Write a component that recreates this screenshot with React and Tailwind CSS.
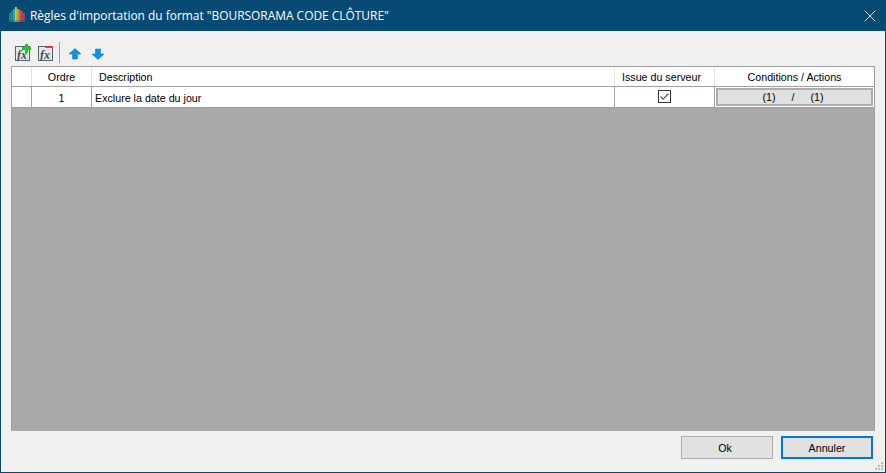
import React from 'react';
import { X } from 'lucide-react';

const uiFont = "font-['Liberation_Sans',Arial,sans-serif]";

const bars = [
  { x: 0, y: 6, c: '#1f9a55' },
  { x: 2, y: 4, c: '#2c7cc8' },
  { x: 4, y: 2, c: '#22b8a8' },
  { x: 6, y: 0, c: '#e8c820' },
  { x: 8, y: 2, c: '#f0a020' },
  { x: 10, y: 3, c: '#e8602a' },
  { x: 12, y: 4, c: '#d8384a' },
  { x: 14, y: 6, c: '#a83c98' },
];

const AppIcon = () => (
  <svg width="16" height="16" viewBox="0 0 16 16" className="shrink-0">
    {bars.map((b) => (
      <rect key={b.x} x={b.x} y={b.y} width="1.8" height={15 - b.y} fill={b.c} />
    ))}
    <rect x="0" y="13" width="16" height="2" fill="#0a3a5a" opacity="0.25" />
  </svg>
);

const FxIcon = ({ remove }) => (
  <svg width="16" height="17" viewBox="0 0 16 17" className="shrink-0">
    <rect x="0.5" y="2.5" width="14" height="14" fill="#e2e8e6" stroke="#56646a" />
    <text x="2" y="14.500" fontFamily="'Liberation Serif', serif" fontStyle="italic" fontWeight="700" fontSize="12" fill="#3f4f58">
      fx
    </text>
    {remove ? (
      <rect x="7" y="2" width="8" height="2" fill="#e8383c" />
    ) : (
      <path d="M10 0h3v3h3v3h-3v3h-3V6H7V3h3z" fill="#16d016" />
    )}
  </svg>
);

const ArrowIcon = ({ down }) => (
  <svg width="12" height="12" viewBox="0 0 12 12" className="shrink-0">
    <path
      d={down ? 'M3.500 1h5v5H12L6 11.500 0 6h3.500z' : 'M6 .5 12 6H8.500v5h-5V6H0z'}
      fill="#0a94ee"
      stroke="#0b6fc0"
      strokeWidth="0.5"
    />
  </svg>
);

const App = () => {
  return (
    <div className={`w-[886px] h-[473px] flex flex-col bg-[#f0f0f0] border-x border-b border-[#074a74] text-black text-[10.7px] overflow-hidden ${uiFont}`}>
      {/* title bar */}
      <div className="h-[31px] shrink-0 -mx-px bg-[#074a74] flex items-center pl-[9px] pr-[6px] text-white">
        <div className="-mt-[2px]"><AppIcon /></div>
        <span className="ml-[5px] font-['Open_Sans',sans-serif] text-[11.93px] whitespace-nowrap">
          Règles d'importation du format "BOURSORAMA CODE CLÔTURE"
        </span>
        <X size={20} strokeWidth={1} className="ml-auto text-white" />
      </div>

      {/* toolbar */}
      <div className="h-[35px] shrink-0 flex items-end pb-[3px] pl-[14px]">
        <div className="flex items-center h-[21px]">
          <FxIcon />
          <div className="w-[7px]" />
          <FxIcon remove />
          <div className="ml-[5px] w-px h-[21px] bg-[#a0a0a0]" />
          <div className="ml-[9px] mt-[2px]"><ArrowIcon /></div>
          <div className="ml-[11px] mt-[2px]"><ArrowIcon down /></div>
        </div>
      </div>

      {/* data grid */}
      <div className="mx-[10px] flex-1 bg-[#a9a9a9] flex flex-col min-h-0 border-x border-t border-[#a0a0a0]">
        <div className="h-[20px] shrink-0 bg-white flex border-b border-[#a0a0a0] text-center leading-[21px]">
          <div className="w-[20px] border-r border-[#e0e0e0]" />
          <div className="w-[60px] border-r border-[#e8e8e8]">Ordre</div>
          <div className="w-[523px] border-r border-[#e8e8e8] text-left pl-[7px]">Description</div>
          <div className="w-[100px] border-r border-[#e8e8e8] pr-[6px]">Issue du serveur</div>
          <div className="flex-1">Conditions / Actions</div>
        </div>
        <div className="h-[21px] shrink-0 bg-white flex border-b border-[#a0a0a0] leading-[22px]">
          <div className="w-[20px] border-r border-[#a0a0a0]" />
          <div className="w-[60px] border-r border-[#a0a0a0] text-center">1</div>
          <div className="w-[523px] border-r border-[#a0a0a0] pl-[3px]">Exclure la date du jour</div>
          <div className="w-[100px] border-r border-[#a0a0a0] flex items-center justify-center">
            <svg width="13" height="13" viewBox="0 0 13 13" className="mb-[2px]">
              <rect x="0.5" y="0.5" width="12" height="12" fill="#fff" stroke="#333" />
              <path d="M2.500 6.500 5.200 9.200 10.500 3.500" fill="none" stroke="#555" strokeWidth="1.200" />
            </svg>
          </div>
          <div className="flex-1 p-px">
            <div className="h-full border-2 border-[#adadad] bg-[#e1e1e1] flex items-center justify-center gap-[15px] pr-[3px] leading-none whitespace-pre">
              <span>(1)</span>
              <span className="w-[5px] text-center">/</span>
              <span>(1)</span>
            </div>
          </div>
        </div>
      </div>

      {/* footer */}
      <div className="h-[41px] shrink-0 flex justify-end items-start pt-[5px] pr-[12px] gap-[8px] relative">
        <button className="w-[92px] h-[23px] bg-[#e1e1e1] border border-[#adadad] pr-[4px] pt-px">Ok</button>
        <button className="w-[92px] h-[23px] bg-[#e1e1e1] border-2 border-[#0078d7] pt-px">Annuler</button>
        <svg width="9" height="9" viewBox="0 0 9 9" className="absolute right-[1px] bottom-[1px]">
          <path d="M6 0h2v2H6zM3 3h2v2H3zM6 3h2v2H6zM0 6h2v2H0zM3 6h2v2H3zM6 6h2v2H6z" fill="#b8b8b8" />
        </svg>
      </div>
    </div>
  );
};

export default App;
